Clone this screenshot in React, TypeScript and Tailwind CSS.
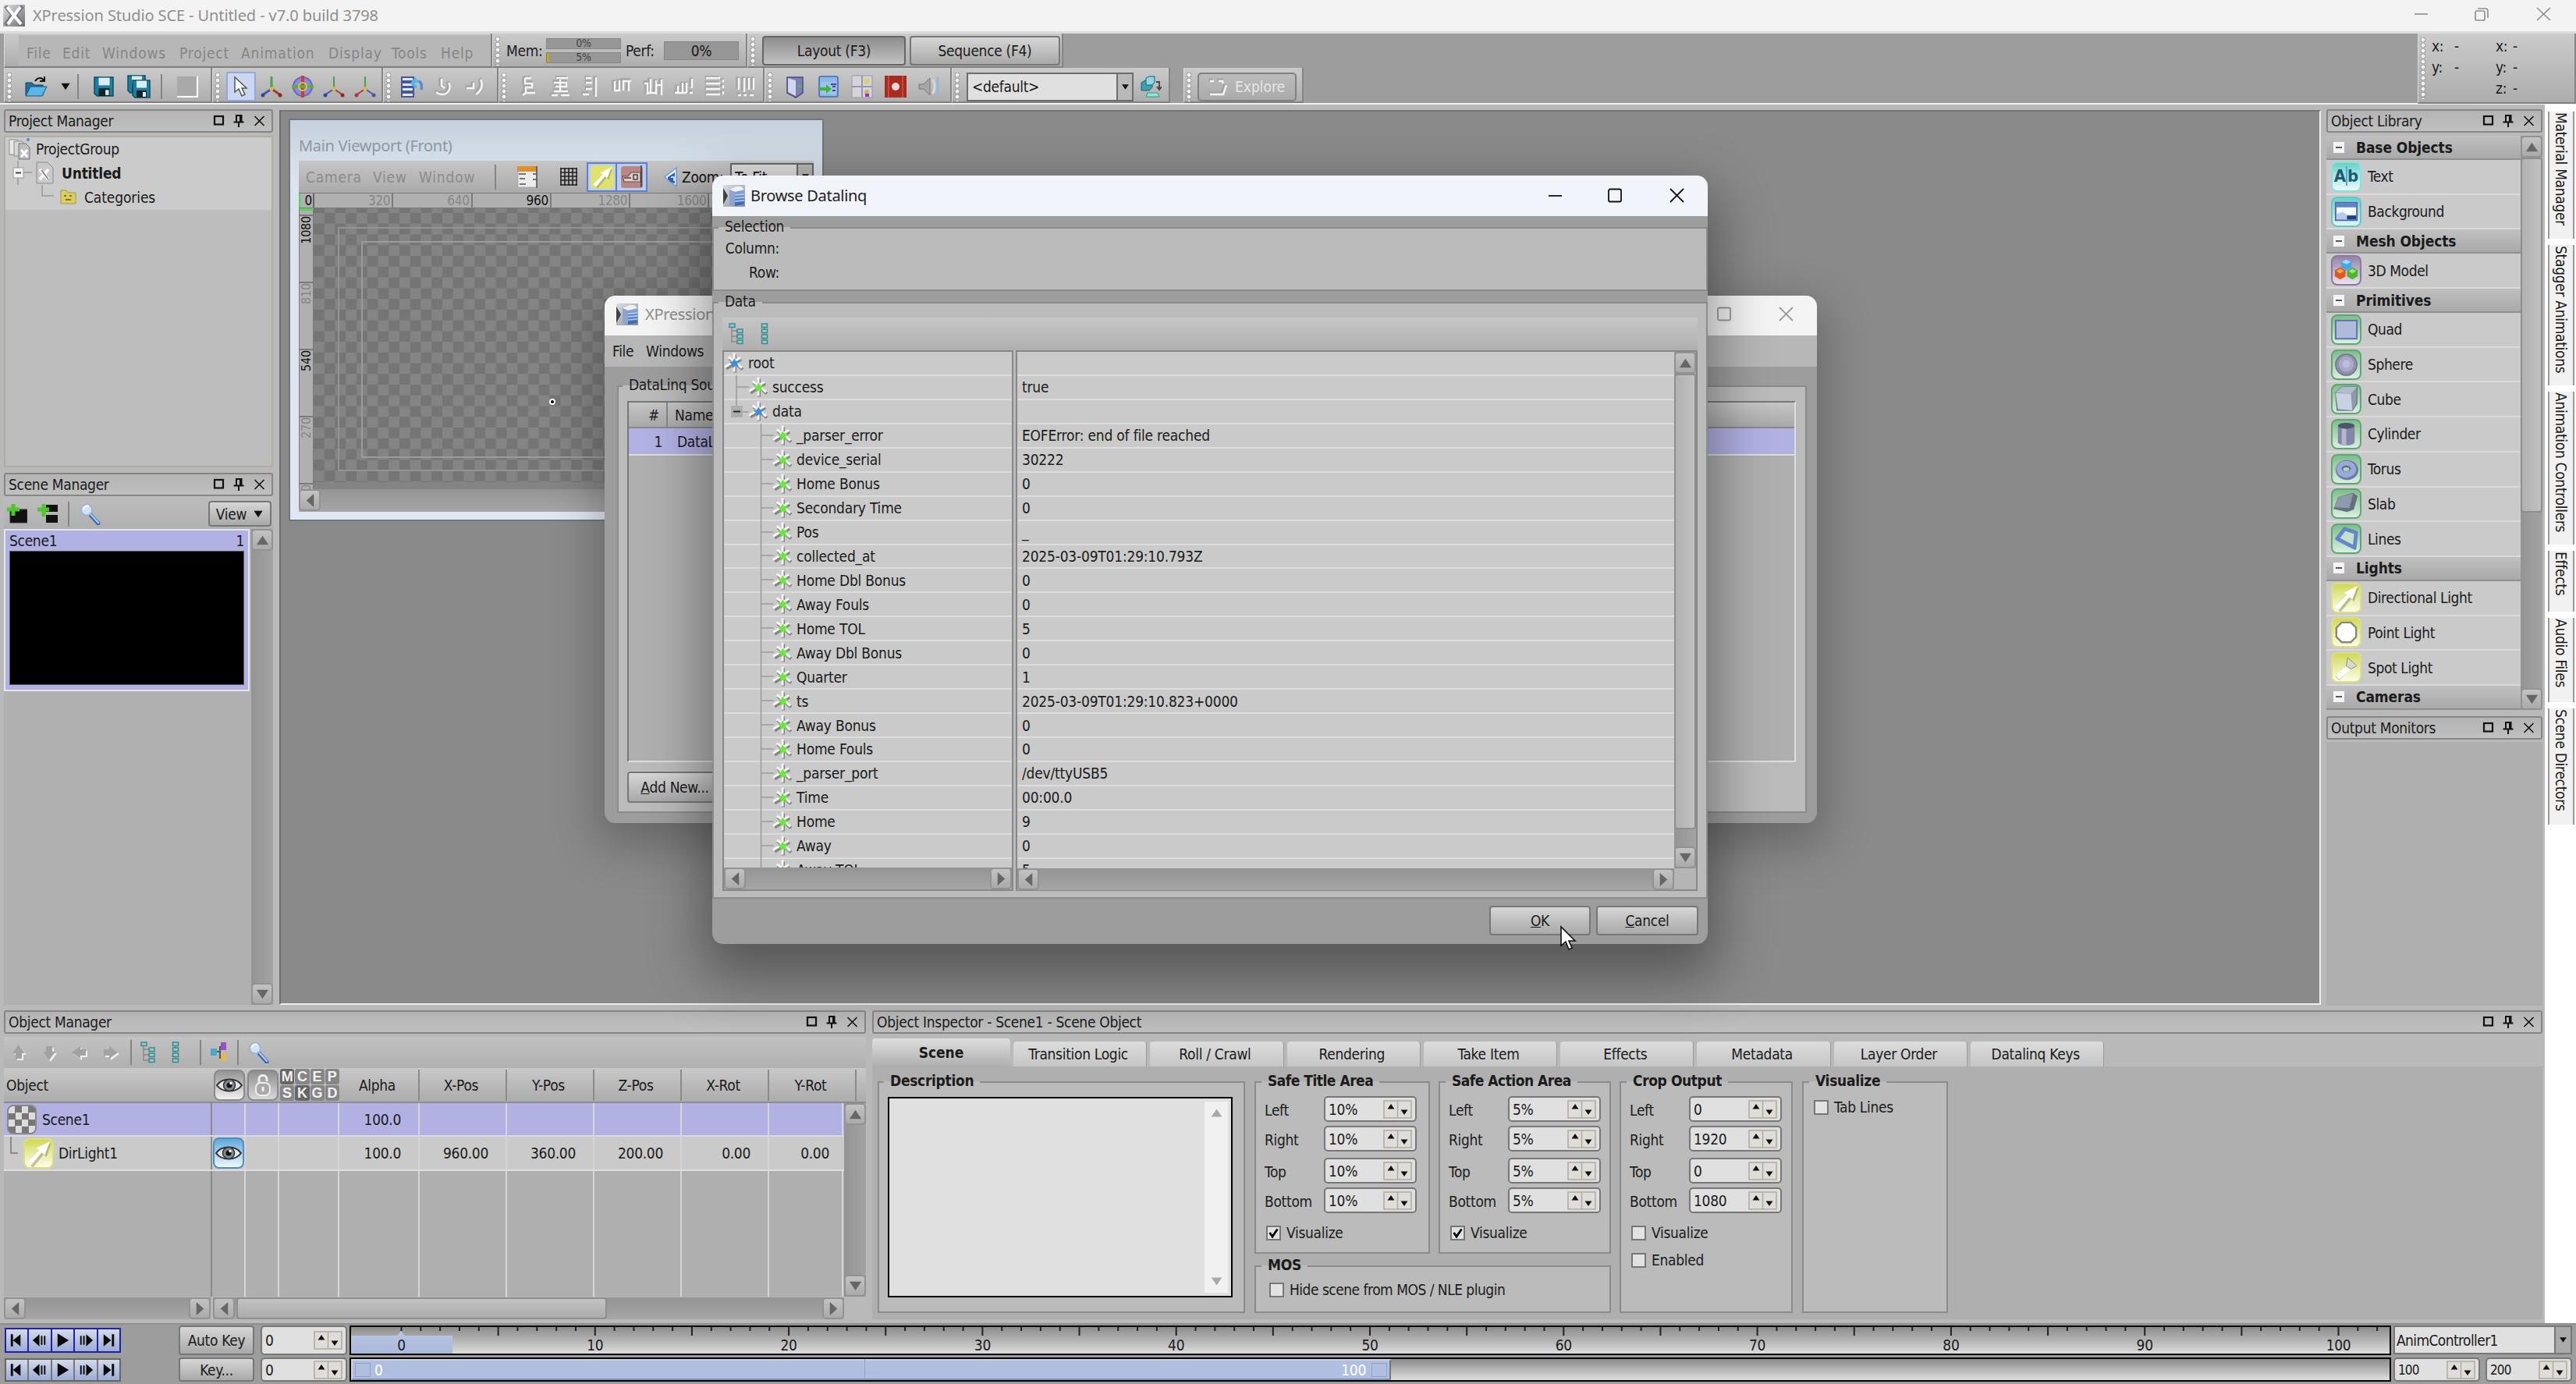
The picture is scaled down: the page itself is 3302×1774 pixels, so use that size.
import type { ReactNode } from 'react';

type BoxProps = { className?: string; children?: ReactNode };

const objectRows: { kind: 'head' | 'item'; label: string; icon?: string }[] = [
	{ kind: 'head', label: 'Base Objects' },
	{ kind: 'item', label: 'Text', icon: 'text' },
	{ kind: 'item', label: 'Background', icon: 'background' },
	{ kind: 'head', label: 'Mesh Objects' },
	{ kind: 'item', label: '3D Model', icon: 'model' },
	{ kind: 'head', label: 'Primitives' },
	{ kind: 'item', label: 'Quad', icon: 'quad' },
	{ kind: 'item', label: 'Sphere', icon: 'sphere' },
	{ kind: 'item', label: 'Cube', icon: 'cube' },
	{ kind: 'item', label: 'Cylinder', icon: 'cylinder' },
	{ kind: 'item', label: 'Torus', icon: 'torus' },
	{ kind: 'item', label: 'Slab', icon: 'slab' },
	{ kind: 'item', label: 'Lines', icon: 'lines' },
	{ kind: 'head', label: 'Lights' },
	{ kind: 'item', label: 'Directional Light', icon: 'directional' },
	{ kind: 'item', label: 'Point Light', icon: 'point' },
	{ kind: 'item', label: 'Spot Light', icon: 'spot' },
	{ kind: 'head', label: 'Cameras' },
];

const dataRows: { depth: number; name: string; value: string }[] = [
	{ depth: 0, name: 'root', value: '' },
	{ depth: 1, name: 'success', value: 'true' },
	{ depth: 1, name: 'data', value: '' },
	{ depth: 2, name: '_parser_error', value: 'EOFError: end of file reached' },
	{ depth: 2, name: 'device_serial', value: '30222' },
	{ depth: 2, name: 'Home Bonus', value: '0' },
	{ depth: 2, name: 'Secondary Time', value: '0' },
	{ depth: 2, name: 'Pos', value: '_' },
	{ depth: 2, name: 'collected_at', value: '2025-03-09T01:29:10.793Z' },
	{ depth: 2, name: 'Home Dbl Bonus', value: '0' },
	{ depth: 2, name: 'Away Fouls', value: '0' },
	{ depth: 2, name: 'Home TOL', value: '5' },
	{ depth: 2, name: 'Away Dbl Bonus', value: '0' },
	{ depth: 2, name: 'Quarter', value: '1' },
	{ depth: 2, name: 'ts', value: '2025-03-09T01:29:10.823+0000' },
	{ depth: 2, name: 'Away Bonus', value: '0' },
	{ depth: 2, name: 'Home Fouls', value: '0' },
	{ depth: 2, name: '_parser_port', value: '/dev/ttyUSB5' },
	{ depth: 2, name: 'Time', value: '00:00.0' },
	{ depth: 2, name: 'Home', value: '9' },
	{ depth: 2, name: 'Away', value: '0' },
	{ depth: 2, name: 'Away TOL', value: '5' },
];

const sideTabs = [
	{ label: 'Material Manager', size: 'h-[163px]' },
	{ label: 'Stagger Animations', size: 'h-[180px]' },
	{ label: 'Animation Controllers', size: 'h-[196px]' },
	{ label: 'Effects', size: 'h-[78px]' },
	{ label: 'Audio Files', size: 'h-[108px]' },
	{ label: 'Scene Directors', size: 'h-[149px]' },
];

const inspectorTabs = ['Transition Logic', 'Roll / Crawl', 'Rendering', 'Take Item', 'Effects', 'Metadata', 'Layer Order', 'Datalinq Keys'];

/* ---------- small shared pieces ---------- */

const Grip = ({ className = 'h-[38px]' }: BoxProps) => (
	<div className={`w-3 shrink-0 bg-[radial-gradient(circle_at_6px_4px,#f4f4f4_2px,#8d8d8d_3px,transparent_3.6px)] bg-[length:12px_7px] ${className}`} />
);

const Strip = ({ className = '', children }: BoxProps) => (
	<div className={`flex shrink-0 items-center border-r-2 border-b-2 border-l border-r-[#858585] border-b-[#808080] border-l-[#d8d8d8] bg-linear-to-b from-[#cbcbcb] to-[#adadad] ${className}`}>{children}</div>
);

const Sep = ({ className = '' }: BoxProps) => <div className={`h-8 w-[2px] shrink-0 bg-[#858585] ${className}`} />;

const Slot = ({ className = 'w-10', children }: BoxProps) => (
	<div className={`flex shrink-0 items-center justify-center ${className}`}>{children}</div>
);

const PushButton = ({ className = '', children }: BoxProps) => (
	<div className={`flex shrink-0 items-center justify-center rounded-[4px] border-2 border-[#777] bg-linear-to-b from-[#d6d6d6] to-[#a9a9a9] ${className}`}>{children}</div>
);

const Triangle = ({ dir, color = '#666', size = 20 }: { dir: 'up' | 'down' | 'left' | 'right'; color?: string; size?: number }) => {
	const points = {
		up: '10,4 18,16 2,16',
		down: '2,4 18,4 10,16',
		left: '5,10 15,1 15,19',
		right: '15,10 5,1 5,19',
	};
	return (
		<svg width={size} height={size} viewBox="0 0 20 20">
			<polygon points={points[dir]} fill={color} />
		</svg>
	);
};

const ScrollButton = ({ dir }: { dir: 'up' | 'down' | 'left' | 'right' }) => (
	<div className="flex h-[28px] w-[28px] shrink-0 items-center justify-center rounded-[5px] border-2 border-[#929292] bg-linear-to-b from-[#c3c3c3] to-[#aaa]">
		<Triangle dir={dir} size={19} />
	</div>
);

const VScroll = ({ className = '', thumb }: { className?: string; thumb?: string }) => (
	<div className={`flex w-[28px] shrink-0 flex-col justify-between bg-linear-to-r from-[#949494] to-[#a3a3a3] ${className}`}>
		<ScrollButton dir="up" />
		<div className="flex-1">
			{thumb && <div className={`rounded-[4px] border-2 border-[#8e8e8e] bg-linear-to-r from-[#b1b1b1] to-[#c1c1c1] ${thumb}`} />}
		</div>
		<ScrollButton dir="down" />
	</div>
);

const HScroll = ({ className = '', thumb }: { className?: string; thumb?: string }) => (
	<div className={`flex h-[28px] shrink-0 bg-linear-to-b from-[#949494] to-[#a6a6a6] ${className}`}>
		<ScrollButton dir="left" />
		<div className="flex-1">
			{thumb && <div className={`ml-[2px] h-full rounded-[4px] border-2 border-[#8e8e8e] bg-linear-to-b from-[#c3c3c3] to-[#ababab] ${thumb}`} />}
		</div>
		<ScrollButton dir="right" />
	</div>
);

const DockHeader = ({ title, className = '' }: { title: string; className?: string }) => (
	<div className={`flex h-[30px] shrink-0 items-center rounded-[3px] border-2 border-[#868686] bg-linear-to-b from-[#b4b4b4] to-[#c0c0c0] pr-[7px] pl-[4px] ${className}`}>
		<span className="flex-1">{title}</span>
		<svg width="68" height="20" viewBox="0 0 68 20" fill="none" stroke="#111">
			<rect x="2" y="4" width="11" height="10.500" strokeWidth="2.200" />
			<path d="M30 11V3h6.500v8M26.500 11.500h13M33 11.500V18" strokeWidth="2" />
			<path d="M35.500 3v8" strokeWidth="3" />
			<path d="M53.500 4l12 12M65.500 4l-12 12" strokeWidth="1.600" />
		</svg>
	</div>
);

const Group = ({ title, className = '', legend = 'ml-[6px]', children }: { title: string; className?: string; legend?: string; children?: ReactNode }) => (
	<fieldset className={`min-w-0 shrink-0 border-2 border-[#8b8b8b] bg-[#bbb] ${className}`}>
		<legend className={`h-5 px-[8px] leading-[16px] ${legend}`}>{title}</legend>
		{children}
	</fieldset>
);

const Spin = ({ value, className = 'h-[33px] w-[119px]' }: { value: string; className?: string }) => (
	<div className={`flex shrink-0 items-center rounded-[5px] border-2 border-[#777] bg-[#e0e0e0] pr-[4px] pl-[4px] ${className}`}>
		<span className="flex-1">{value}</span>
		<svg width="37" height="24" viewBox="0 0 37 24">
			<rect x="1" y="1" width="35" height="22" fill="#deddd9" stroke="#b3ada0" strokeWidth="1.600" />
			<path d="M18.500 1v22" stroke="#b3ada0" strokeWidth="1.600" />
			<polygon points="10,5 14.500,11.500 5.500,11.500" fill="#111" />
			<polygon points="22.500,12.500 31.500,12.500 27,19" fill="#111" />
		</svg>
	</div>
);

const Check = ({ label, checked, className = '' }: { label: string; checked?: boolean; className?: string }) => (
	<div className={`flex items-center gap-[7px] ${className}`}>
		<svg width="19" height="19" viewBox="0 0 19 19">
			<rect x="1" y="1" width="17" height="17" fill="#e2e2e2" stroke="#777" strokeWidth="2" />
			{checked && <path d="M4.500 9l3.500 5 6.500-9.500" fill="none" stroke="#000" strokeWidth="2.800" />}
		</svg>
		<span>{label}</span>
	</div>
);

/* ---------- icons ---------- */

const AppIcon = () => (
	<svg width="28" height="28" viewBox="0 0 28 28">
		<defs>
			<linearGradient id="appBg" x1="0" y1="0" x2="1" y2="1">
				<stop offset="0" stopColor="#e4e4e4" />
				<stop offset="1" stopColor="#6d6d72" />
			</linearGradient>
		</defs>
		<rect width="28" height="28" fill="url(#appBg)" />
		<path d="M3 2l9 11L3 26M25 2l-9 11 9 13" stroke="#77777e" strokeWidth="5" fill="none" />
		<path d="M5 3l18 22M22 3L6 25" stroke="#fafafa" strokeWidth="4" />
	</svg>
);

const DatalinqIcon = () => (
	<svg width="28" height="28" viewBox="0 0 28 28">
		<defs>
			<linearGradient id="dlBg" x1="0" y1="0" x2="1" y2="1">
				<stop offset="0" stopColor="#dcdee2" />
				<stop offset="1" stopColor="#8d8f96" />
			</linearGradient>
			<linearGradient id="dlBox" x1="0" y1="0" x2="0" y2="1">
				<stop offset="0" stopColor="#9fb6dc" />
				<stop offset="1" stopColor="#3362b4" />
			</linearGradient>
		</defs>
		<rect width="28" height="28" fill="url(#dlBg)" />
		<path d="M0 4l6 10-6 11z" fill="#3c4048" />
		<path d="M8 6l12-3 7 3v19l-12 2-7-3z" fill="url(#dlBox)" />
		<path d="M8 6l9-4h6l4 4-12 3z" fill="#eef2f8" />
		<path d="M8 6l7 3v18l-7-3z" fill="#8fa4cc" />
		<path d="M15 13l12-1M15 17l12-1M15 21l12-1" stroke="#b5d0fa" strokeWidth="1.400" />
	</svg>
);

const TreeIcon = ({ flat }: { flat?: boolean }) => (
	<svg width="20" height="28" viewBox="0 0 20 28" fill="#7fd4d6" stroke="#467f84" strokeWidth="1.400">
		<path d={flat ? 'M8 3v22' : 'M4 3v22M4 10h8M4 17h8M4 24h8'} stroke="#888" />
		<rect x={flat ? 4.500 : 1} y="1" width="7" height="4.500" />
		<rect x={flat ? 4.500 : 11} y="8" width="7" height="4.500" />
		<rect x={flat ? 4.500 : 11} y="15" width="7" height="4.500" />
		<rect x={flat ? 4.500 : 11} y="22" width="7" height="4.500" />
	</svg>
);

const SearchIcon = () => (
	<svg width="28" height="28" viewBox="0 0 28 28">
		<path d="M14 15l10 11" stroke="#3566ad" strokeWidth="5" strokeLinecap="round" />
		<path d="M15 15l9 10" stroke="#a7cdf5" strokeWidth="2.400" strokeLinecap="round" />
		<circle cx="9" cy="8.500" r="7" fill="#cfe4fb" stroke="#9fb4d4" strokeWidth="2" />
		<path d="M5 8a5 5 0 0 1 7-4" stroke="#fff" strokeWidth="2" fill="none" />
	</svg>
);

const OpenIcon = () => (
	<svg width="30" height="28" viewBox="0 0 30 28">
		<path d="M1 9h8l3 3h11v13H1z" fill="#1e6f9c" stroke="#123f5e" />
		<path d="M7 14h21l-6 12H1z" fill="#58b7e8" stroke="#1b5577" />
		<path d="M13 7c3-5 8-5 11-1M25 1v6h-6" stroke="#111" strokeWidth="2" fill="none" />
	</svg>
);

const Disk = ({ x = 0, y = 0 }: { x?: number; y?: number }) => (
	<g transform={`translate(${x} ${y})`}>
		<path d="M1 1h22v22H4l-3-3z" fill="#1e7e9e" stroke="#0f4d66" strokeWidth="1.500" />
		<rect x="6" y="1.500" width="13" height="9" fill="#d8eef5" />
		<rect x="6" y="14" width="13" height="9" fill="#12242c" />
		<rect x="14" y="16" width="4" height="6" fill="#e8e8e8" />
	</g>
);

const ArrowCursor = () => (
	<svg width="22" height="28" viewBox="0 0 22 28">
		<path d="M3 2v19l5-4 4 9 4-2-4-8h6z" fill="#fff" stroke="#555" strokeWidth="1.500" />
	</svg>
);

const AxisIcon = ({ fade, flat }: { fade?: boolean; flat?: boolean }) => (
	<svg width="30" height="30" viewBox="0 0 30 30" strokeWidth={fade ? 2 : 3} fill="none">
		<path d="M15 2v16" stroke="#4aa34a" />
		<path d="M15 18L3 26" stroke={flat ? '#b03a3a' : '#4a55a8'} />
		<path d="M15 18l12 8" stroke={flat ? '#4a55a8' : '#a33a2c'} />
		<circle cx="15" cy="18" r="2.500" fill="#e0b64c" stroke="none" />
		<circle cx="4" cy="26" r="2.500" fill={flat ? '#b03a3a' : '#3846a0'} stroke="none" />
		<circle cx="26" cy="26" r="2.500" fill={flat ? '#4a55a8' : '#8f2a22'} stroke="none" />
	</svg>
);

const RotateIcon = () => (
	<svg width="30" height="30" viewBox="0 0 30 30">
		<circle cx="15" cy="15" r="12" fill="#8f88e0" stroke="#6b64c4" strokeWidth="2" />
		<path d="M15 1v28" stroke="#c5432f" strokeWidth="4" />
		<path d="M1 15h28" stroke="#57b23c" strokeWidth="4" />
		<circle cx="15" cy="15" r="5" fill="none" stroke="#e2c13d" strokeWidth="2" />
	</svg>
);

const UndoListIcon = () => (
	<svg width="28" height="28" viewBox="0 0 28 28">
		<path d="M1 2h15v5H1zM1 9h15v5H1zM1 15h15v5H1zM1 22h15v5H1z" fill="#dfe9f8" stroke="#46579c" strokeWidth="2" />
		<path d="M26 18c2-9-3-14-11-9M19 3l-5 7 6 5" stroke="#4fb6ec" strokeWidth="3.400" fill="none" />
		<path d="M26 18c1-5 1-9-3-11" stroke="#6b7fc4" strokeWidth="3" fill="none" />
	</svg>
);

// embossed look of a disabled tool: grey body with a white lower-right edge
const GhostIcon = ({ d }: { d: string }) => (
	<svg width="26" height="28" viewBox="0 0 26 28" fill="none">
		<path d={d} stroke="#a3a3a3" strokeWidth="4.500" transform="translate(-1.500 -1.500)" />
		<path d={d} stroke="#f6f6f6" strokeWidth="2.400" />
	</svg>
);

const GhostArrow = ({ turn }: { turn: number }) => (
	<svg width="26" height="28" viewBox="0 0 26 28">
		<g transform={`rotate(${turn} 13 14)`}>
			<polygon points="13,4 21,15 17,15 17,22 9,22 9,15 5,15" fill="#f0f0f0" transform={`rotate(${-turn} 13 14) translate(2 2) rotate(${turn} 13 14)`} />
			<polygon points="13,4 21,15 17,15 17,22 9,22 9,15 5,15" fill="#a2a2a2" />
		</g>
	</svg>
);

const alignGlyphs = [
	'M7 3h8M7 3v7h9v5H8v6M4 25l4-3h12',
	'M8 3h15M5 9h16v5H7M5 20h18M2 25h8M14 25h11M13 5v14',
	'M19 2v25M6 9h8M6 17h8M2 24h8M6 3h7',
	'M4 7v12h6V6M15 19V7h10M22 8v12',
	'M2 10h4v14M10 4v18h6M17 6v18M17 12h8M24 5v20M6 22h4',
	'M2 22h15M6 13v9M12 9v13M17 9v13M21 22h4M24 4v12',
	'M2 3h18M2 10h18M2 17h18M2 24h18M24 5v3M24 12v4M24 20v4',
	'M5 3v15M12 3v18M18 3v15M24 3v15M4 25h4M11 25h4M19 25h5',
];

const ViewportTools = () => (
	<>
		<svg width="26" height="28" viewBox="0 0 26 28">
			<rect x="1" y="1" width="24" height="26" fill="#ececec" stroke="#aaa" />
			<rect width="26" height="7" fill="#e1902c" />
			<path d="M2 10h9M20 10h5M3 16h7M20 17h5M3 23h8" stroke="#777" strokeWidth="1.800" />
			<path d="M25 0v28" stroke="#555" strokeWidth="1.600" />
		</svg>
		<svg className="ml-[29px]" width="22" height="23" viewBox="0 0 22 23">
			<path d="M1 0v23M6 0v23M11 0v23M16 0v23M21 0v23M0 1h22M0 6h22M0 11h22M0 16h22M0 22h22" stroke="#222" strokeWidth="1.600" />
		</svg>
	</>
);

const tileColors: Record<string, string> = {
	text: 'from-[#65d3cb] to-[#e9fbfa] border-[#8de0da]',
	background: 'from-[#65d3cb] to-[#d9f6f4] border-[#6cc5c0]',
	model: 'from-[#9583a8] to-[#e9e3ee] border-[#8b78a0]',
	light: 'from-[#d3d850] to-[#fdfde9] border-[#dce07c]',
	shape: 'from-[#7fbd8c] to-[#dcefe0] border-[#5ea672]',
};

const tileArt: Record<string, ReactNode> = {
	background: (
		<>
			<rect x="5" y="7" width="28" height="23" fill="#f4f8ff" stroke="#4a68a8" strokeWidth="2" />
			<path d="M6 8h26v5H6z" fill="#5f86cc" />
			<path d="M6 22l8-3 7 4h11v6H6z" fill="#b8cbe8" />
			<path d="M20 24h12v5H20z" fill="#1f3f7c" />
		</>
	),
	model: (
		<>
			<path d="M19 4l7 4v7l-7 4-7-4V8z" fill="#4ba5ea" />
			<path d="M11 15l7 4v8l-7 4-7-4v-8z" fill="#e0561e" />
			<path d="M27 15l7 4v8l-7 4-7-4v-8z" fill="#4fb52e" />
			<path d="M19 5l6 3-6 3-6-3z" fill="#a6d9fb" />
			<path d="M11 17l5 3-5 3-5-3z" fill="#f5b03d" />
			<path d="M27 17l5 3-5 3-5-3z" fill="#a0e37e" />
		</>
	),
	quad: <rect x="5" y="7" width="28" height="24" fill="#aebbdc" stroke="#5974ad" strokeWidth="2" />,
	sphere: (
		<>
			<circle cx="19" cy="19" r="14" fill="#8f90ac" stroke="#71728c" strokeWidth="1.500" />
			<circle cx="19" cy="18" r="10" fill="#a9aac8" />
			<circle cx="19" cy="18" r="5" fill="#bcbde0" />
		</>
	),
	cube: (
		<>
			<path d="M5 10l9-7h19v22l-6 9H7z" fill="#8e99ac" stroke="#6e7a8d" strokeWidth="1.500" />
			<path d="M5 11l20 1 2 22-19-2z" fill="#c9d1e4" />
			<path d="M5 10l9-7h19l-8 9z" fill="#b4bdd0" />
		</>
	),
	cylinder: (
		<>
			<path d="M8 8v22c3 5 19 5 22 0V8z" fill="#8486a6" />
			<path d="M13 10v23h6V11z" fill="#b4b6d2" />
			<ellipse cx="19" cy="8" rx="11" ry="4" fill="#4d5668" />
		</>
	),
	torus: (
		<>
			<ellipse cx="20" cy="20" rx="15" ry="13" fill="#6b7aa8" />
			<ellipse cx="19" cy="19" rx="13" ry="11" fill="#9aaad6" />
			<ellipse cx="19" cy="18" rx="6" ry="4" fill="#5b6a98" />
			<ellipse cx="19" cy="19" rx="4" ry="2.500" fill="#b2d4ba" />
		</>
	),
	slab: (
		<>
			<path d="M2 26l7-16 19-5 6 4-5 18-9 3z" fill="#65707f" />
			<path d="M3 24l7-14 18-4-5 19z" fill="#8f9aab" />
		</>
	),
	lines: <path d="M7 19L17 6l15 5-2 20z" fill="#c6e2cf" stroke="#6288c8" strokeWidth="5" strokeLinejoin="round" />,
	directional: (
		<>
			<path d="M5 32l16-16-4-4 17-8-6 18-4-3L10 36z" fill="#9a9a60" opacity=".6" transform="translate(1.500 1.500)" />
			<path d="M4 31l16-16-4-3 18-9-7 18-4-3L9 35z" fill="#fff" />
		</>
	),
	point: <path d="M13 6h12l7 7v12l-7 7H13l-7-7V13z" fill="#fff" stroke="#8a8a70" strokeWidth="2.500" />,
	spot: (
		<>
			<path d="M5 31l14-13 2-11 12 10-10 4L10 36z" fill="#a9a996" />
			<path d="M5 30l14-13 6 4L10 35z" fill="#fff" />
			<path d="M19 17l2-11 12 11-8 4z" fill="#d8d8cf" stroke="#8f8f7c" />
		</>
	),
};

const Tile = ({ icon }: { icon: string }) => {
	let tone = tileColors.shape;
	if (['directional', 'point', 'spot'].includes(icon)) tone = tileColors.light;
	else if (tileColors[icon]) tone = tileColors[icon];
	return (
		<div className={`flex h-[39px] w-[39px] shrink-0 items-center justify-center overflow-hidden rounded-[8px] border-2 bg-linear-to-b ${tone}`}>
			{icon === 'text' ? (
				<span className="font-['DejaVu_Sans_Condensed','DejaVu_Sans',sans-serif] text-[22px] font-bold tracking-normal text-[#1f5a74]">
					A<span className="border-l-2 border-[#4da8e8]">b</span>
				</span>
			) : (
				<svg width="37" height="37" viewBox="0 0 38 38" className="shrink-0">{tileArt[icon]}</svg>
			)}
		</div>
	);
};

const EyeTile = ({ blue }: { blue?: boolean }) => (
	<div className={`flex h-[40px] w-[40px] shrink-0 items-center justify-center rounded-[8px] border-2 bg-linear-to-b ${blue ? 'border-[#4e8fbf] from-[#5fa8dc] to-[#eef8ff]' : 'border-[#8a8a8a] from-[#949494] to-[#f1f1f1]'}`}>
		<svg width="34" height="26" viewBox="0 0 34 26">
			<path d="M1 13C8 3 26 3 33 13 26 23 8 23 1 13z" fill="#e6e6e6" stroke="#333" strokeWidth="2" />
			<circle cx="17" cy="13" r="7.500" fill="#7d8a90" stroke="#333" strokeWidth="1.500" />
			<circle cx="17" cy="13" r="3.500" fill="#111" />
			<circle cx="19" cy="10.500" r="1.700" fill="#fff" />
		</svg>
	</div>
);

/* ---------- top bars ---------- */

const TitleBar = () => (
	<div className="flex h-10 shrink-0 items-center bg-[#f3f3f3] pl-1 font-['Noto_Sans','Open_Sans',sans-serif] text-[20px] tracking-[-0.1px] text-[#8f8f8f]">
		<AppIcon />
		<span className="ml-[10px] flex-1">XPression Studio SCE - Untitled - v7.0 build 3798</span>
		<svg width="180" height="24" viewBox="0 0 180 24" fill="none" stroke="#909090" strokeWidth="1.700" className="mr-[29px]">
			<path d="M2 10h17" />
			<rect x="80" y="6" width="12" height="12" rx="2" />
			<path d="M83 3h10q3 0 3 3v9" />
			<path d="M159 2l17 16M176 2l-17 16" />
		</svg>
	</div>
);

const MenuRow = () => (
	<div className="flex h-[44px] shrink-0">
		<Strip className="w-[626px] pl-[18px]">
			<div className="flex h-[39px] flex-1 items-center bg-[#b7b7b7] pt-[7px] pl-[10px] tracking-[0.800px] text-[#868686]">
				{[['File', 'w-[46px]'], ['Edit', 'w-[51px]'], ['Windows', 'w-[99px]'], ['Project', 'w-[79px]'], ['Animation', 'w-[112px]'], ['Display', 'w-[81px]'], ['Tools', 'w-[63px]'], ['Help', 'w-[50px]']].map(([label, size]) => (
					<span key={label} className={size}>{label}</span>
				))}
			</div>
		</Strip>
		<Strip className="w-[327px] pt-[2px]">
			<Grip />
			<span className="ml-[5px] w-[51px]">Mem:</span>
			<div className="flex w-[96px] flex-col gap-1 text-center text-[14px] leading-[11px] text-[#444]">
				<div className="h-[14px] border border-[#868686] bg-[#979797]">0%</div>
				<div className="h-[14px] border border-[#868686] border-l-[#3da83d] bg-[#979797] shadow-[inset_3px_0_0_#d8992f]">5%</div>
			</div>
			<span className="ml-[6px] w-[49px]">Perf:</span>
			<div className="flex h-[24px] w-[96px] items-center justify-center border border-[#868686] bg-[#979797]">0%</div>
		</Strip>
		<Strip className="w-[405px] pt-[2px]">
			<Grip />
			<div className="ml-[6px] flex h-[38px] w-[184px] items-center justify-center rounded-[4px] border-2 border-[#666] bg-linear-to-b from-[#8e8e8e] to-[#c2c2c2]">Layout (F3)</div>
			<PushButton className="ml-[5px] h-[38px] w-[193px]">Sequence (F4)</PushButton>
		</Strip>
	</div>
);

const ToolRow = () => (
	<div className="flex h-[45px] shrink-0 *:pt-[5px]">
		<Strip className="w-[267px]">
			<Grip />
			<Slot className="ml-[14px] w-[30px]"><OpenIcon /></Slot>
			<Slot className="ml-[15px] w-[14px]"><Triangle dir="down" color="#111" size={14} /></Slot>
			<Sep className="ml-[8px]" />
			<svg className="ml-[19px]" width="26" height="26" viewBox="0 0 24 24"><Disk /></svg>
			<svg className="ml-[17px]" width="31" height="30" viewBox="0 0 31 30"><Disk /><Disk x={6} y={6} /></svg>
			<Sep className="ml-[12px]" />
			<div className="ml-[19px] h-[27px] w-[27px] border-r-2 border-b-2 border-white bg-[#a9a9a9]" />
		</Strip>
		<Strip className="w-[219px]">
			<Grip />
			<div className="ml-[5px] flex h-[38px] w-[38px] items-center justify-center border-2 border-[#93a9dc] bg-[#cbd6f0]"><ArrowCursor /></div>
			<Slot><AxisIcon /></Slot>
			<Slot><RotateIcon /></Slot>
			<Slot><AxisIcon fade /></Slot>
			<Slot><AxisIcon fade flat /></Slot>
		</Strip>
		<Strip className="w-[148px]">
			<Grip />
			<Slot className="ml-[4px] w-10"><UndoListIcon /></Slot>
			<Slot><GhostIcon d="M20 9c4 6 0 15-8 15-4 0-6-1-8-3M11 4v9l4 3" /></Slot>
			<Slot><GhostIcon d="M21 5c4 8 0 15-6 19M3 16l9 0V9" /></Slot>
		</Strip>
		<Strip className="w-[341px]">
			<Grip className="mr-[7px] h-[38px]" />
			{alignGlyphs.map((d) => <Slot key={d} className="w-[39.500px]"><GhostIcon d={d} /></Slot>)}
		</Strip>
		<Strip className="w-[240px]">
			<Grip className="mr-[4px] h-[38px]" />
			<Slot className="w-[43px]">
				<svg width="24" height="30" viewBox="0 0 24 30">
					<path d="M2 3h20v20l-9 6-11-6z" fill="#7d7fb4" stroke="#4b4d80" strokeWidth="1.500" />
					<path d="M3 4l10 3v20L3 22z" fill="#d3d4ee" />
					<rect x="15" y="13" width="6" height="3" fill="#4fb070" />
				</svg>
			</Slot>
			<Slot className="w-[43px]">
				<svg width="26" height="28" viewBox="0 0 26 28">
					<rect x="1" y="1" width="24" height="26" rx="2" fill="#8db7e8" stroke="#3e6cae" strokeWidth="1.500" />
					<rect x="3" y="8" width="20" height="16" fill="#9cc3ee" />
					<path d="M1 15h9v-4l7 6-7 6v-4H1z" fill="#45b335" />
					<path d="M16 11h7M18 14h4M18 19h4" stroke="#5a3b8f" strokeWidth="2" />
				</svg>
			</Slot>
			<Slot className="w-[43px]">
				<svg width="28" height="30" viewBox="0 0 28 30">
					<path d="M1 1h26v28H1z" fill="#d6d4da" stroke="#9b97ad" />
					<path d="M14 1v28M1 15h26" stroke="#9b97ad" strokeWidth="2" />
					<circle cx="20" cy="8" r="4" fill="#d9cf79" />
					<circle cx="20" cy="22" r="3" fill="#cbb45e" />
					<path d="M18 24h5v4h-5z" fill="#a02bc4" />
				</svg>
			</Slot>
			<Slot className="w-[43px]">
				<svg width="28" height="28" viewBox="0 0 28 28">
					<rect width="28" height="28" fill="#a82a20" />
					<path d="M5 0v28M23 0v28" stroke="#c64a3c" strokeWidth="2" />
					<circle cx="14" cy="14" r="5" fill="#f3d9d5" />
				</svg>
			</Slot>
			<Slot className="w-[43px]">
				<svg width="28" height="28" viewBox="0 0 28 28">
					<path d="M1 11h6l8-8v22l-8-8H1z" fill="#a5a9a6" stroke="#777" />
					<path d="M18 5c4 4 4 14 0 18" stroke="#d8d8d8" strokeWidth="3" fill="none" />
					<path d="M25 2v24" stroke="#9ab4dc" strokeWidth="3" />
				</svg>
			</Slot>
		</Strip>
		<Strip className="w-[280px]">
			<Grip />
			<div className="ml-[6px] flex h-[37px] w-[214px] border-2 border-[#6d6d6d] bg-[#e0e0e0]">
				<span className="flex-1 self-center pl-[5px]">&lt;default&gt;</span>
				<div className="flex w-[20px] items-center justify-center border-l-2 border-[#6d6d6d] bg-[#b9b9b9]"><Triangle dir="down" color="#111" size={11} /></div>
			</div>
			<Slot className="ml-[2px] w-10">
				<svg width="28" height="28" viewBox="0 0 28 28">
					<path d="M2 9l5-3h9v9l-4 4H2z" fill="#3f9fb0" stroke="#1f5f6c" />
					<path d="M8 3l4-2h7v8l-4 3H8z" fill="#8fd6e0" stroke="#1f5f6c" />
					<path d="M21 8h4v9M22 14l3 4 3-4" stroke="#444" strokeWidth="1.800" fill="none" />
					<path d="M10 22h13l2 5H8z" fill="#8ee4da" stroke="#3f8f88" />
				</svg>
			</Slot>
		</Strip>
		<Strip className="ml-[17px] w-[154px]">
			<Grip />
			<div className="ml-[5px] flex h-[37px] w-[127px] items-center gap-[9px] rounded-[5px] border-2 border-[#818181] bg-linear-to-b from-[#bcbcbc] to-[#aaa] pl-[11px] tracking-normal text-[#e6e6e6]">
				<GhostIcon d="M3 7h5M14 7h5l1 3M3 24h17l4-12" />
				Explore
			</div>
		</Strip>
	</div>
);

const TopBars = () => (
	<div className="flex h-[94px] shrink-0 justify-between border-t-[3px] border-b-2 border-t-[#dcdcdc] border-b-[#f1f1f1] bg-[#9d9d9d] pl-[5px]">
		<div className="flex flex-col">
			<MenuRow />
			<ToolRow />
		</div>
		<Strip className="h-[90px] w-[203px]">
			<Grip className="h-[80px]" />
			<div className="-mt-[2px] ml-[5px] grid flex-1 grid-cols-[29px_53px_22px_1fr] gap-y-[7px] leading-[20px]">
				<span>x:</span><span>-</span><span>x:</span><span>-</span>
				<span>y:</span><span>-</span><span>y:</span><span>-</span>
				<span /><span /><span>z:</span><span>-</span>
			</div>
		</Strip>
	</div>
);

/* ---------- left dock ---------- */

const LeftDock = () => (
	<div className="flex w-[352px] shrink-0 flex-col pt-[6px] pl-[5px]">
		<DockHeader title="Project Manager" className="w-[345px]" />
		<div className="mt-[4px] h-[425px] w-[345px] border-2 border-[#b3aca2] bg-[#bdbdbd]">
			<div className="flex h-[93px] flex-col bg-[#cbcbcb] pl-[3px]">
				<div className="flex h-[30px] items-center gap-[7px]">
					<svg width="29" height="28" viewBox="0 0 29 28">
						<path d="M2 2h10l4 5v14H2z" fill="#e9e9e9" stroke="#8c8c8c" />
						<path d="M8 4h10l4 5v14H8z" fill="#d7d7d7" stroke="#8c8c8c" />
						<path d="M14 7h9l5 5v15H14z" fill="#bdbdbd" stroke="#777" />
						<path d="M17 15l8 9M25 15l-8 9" stroke="#fff" strokeWidth="3" />
						<circle cx="26" cy="2" r="2" fill="#4a8bd4" />
					</svg>
					ProjectGroup
				</div>
				<div className="flex h-[31px] items-center">
					<svg width="66" height="31" viewBox="0 0 66 31">
						<path d="M13 0v31M13 15h18" stroke="#999" strokeWidth="1.500" />
						<rect x="7" y="9" width="13" height="13" fill="#f5f5f5" stroke="#999" />
						<path d="M10 15.500h7" stroke="#445" strokeWidth="2" />
						<path d="M37 2h14l7 7v20H37z" fill="#c9c9c9" stroke="#8c8c8c" />
						<path d="M41 11l11 13M52 11L41 24" stroke="#fff" strokeWidth="4" />
						<path d="M43 12l9 12" stroke="#777" strokeWidth="1.500" />
					</svg>
					<span className="pl-[3px] font-bold tracking-[-0.200px]">Untitled</span>
				</div>
				<div className="flex h-[31px] items-center">
					<svg width="92" height="31" viewBox="0 0 92 31">
						<path d="M44 0v14h15" stroke="#999" strokeWidth="1.500" fill="none" />
						<path d="M68 7h7l2 3h10v14H68z" fill="#d9cf62" stroke="#a59c3f" />
						<path d="M72 14h3M79 14h3M74 19h7" stroke="#7f7722" strokeWidth="2" />
					</svg>
					<span className="pl-[6px] tracking-[-0.100px]">Categories</span>
				</div>
			</div>
		</div>
		<DockHeader title="Scene Manager" className="mt-[7px] w-[345px]" />
		<div className="flex h-[42px] w-[345px] items-center bg-linear-to-b from-[#bdbdbd] to-[#b0b0b0] pt-[3px] pl-[3px]">
			<svg width="27" height="27" viewBox="0 0 27 27">
				<rect x="5" y="8" width="22" height="17" fill="#111" stroke="#333" />
				<path d="M9 1v15M1 8h16" stroke="#4fc52e" strokeWidth="5" />
			</svg>
			<svg className="ml-[12px]" width="28" height="27" viewBox="0 0 28 27">
				<path d="M12 2h15v9H12zM12 15h15v10H12z" fill="#111" />
				<path d="M9 1v16M1 8h15" stroke="#4fc52e" strokeWidth="5" />
			</svg>
			<Sep className="ml-[12px]" />
			<span className="ml-[13px]"><SearchIcon /></span>
			<PushButton className="mr-[2px] ml-auto h-[33px] w-[81px] gap-2">
				View<Triangle dir="down" color="#111" size={14} />
			</PushButton>
		</div>
		<div className="flex h-[610px] w-[345px] bg-[#b0b0b0]">
			<div className="flex-1">
				<div className="mr-[2px] flex h-[208px] flex-col border-2 border-[#e5e5ee] bg-[#b1b1e4] px-[5px] pb-[6px]">
					<div className="flex h-[26px] items-center justify-between">
						<span>Scene1</span>
						<span>1</span>
					</div>
					<div className="flex-1 border border-[#555] bg-black" />
				</div>
			</div>
			<VScroll />
		</div>
	</div>
);

/* ---------- workspace ---------- */

const MainViewport = () => (
	<div className="absolute top-[9px] left-[10px] flex h-[516px] w-[686px] flex-col border-2 border-[#6f7680] bg-[#dfe7f2] bg-linear-to-b from-[#c6d1dd] via-[#dbe4ee] via-15% to-[#dfe7f2] px-[11px]">
		<div className="flex h-[52px] shrink-0 items-end pb-[8px] font-['Noto_Sans','Open_Sans',sans-serif] text-[20px] text-[#8f979f]">Main Viewport (Front)</div>
		<div className="flex h-[41px] shrink-0 items-center bg-linear-to-b from-[#c6c6c6] to-[#aaa] pl-[9px] tracking-[0.800px] text-[#8b8b8b]">
			<span className="w-[86px]">Camera</span>
			<span className="w-[59px]">View</span>
			<span className="w-[97px]">Window</span>
			<Sep className="mr-[27px]" />
			<ViewportTools />
			<div className="ml-[12px] flex h-[38px] w-[39px] items-center justify-center border-2 border-[#5d80c9] bg-[#bccbf0]">
				<svg width="30" height="30" viewBox="0 0 38 38"><rect width="38" height="38" rx="6" fill="#dfe26d" />{tileArt.directional}</svg>
			</div>
			<div className="flex h-[38px] w-[39px] items-center justify-center border-2 border-l-0 border-[#5d80c9] bg-[#bccbf0]">
				<svg width="30" height="30" viewBox="0 0 30 30">
					<rect x="1" y="1" width="28" height="28" rx="4" fill="#b88784" />
					<path d="M3 14h7l4-5h12v12H5z" fill="#d8d0cc" stroke="#6a4a48" strokeWidth="1.200" />
					<path d="M5 16h9M17 12h5v6h-5z" stroke="#5c3a38" strokeWidth="1.500" fill="none" />
					<path d="M27 0v28" stroke="#333" strokeWidth="1.500" />
				</svg>
			</div>
			<svg className="ml-[20px]" width="20" height="28" viewBox="0 0 20 28">
				<path d="M17 2v24L2 14z" fill="#f4f8ff" stroke="#6f9be0" strokeWidth="1.500" />
				<path d="M6 14l9-6v14l-4-1-5-4z" fill="#2e63b4" />
				<path d="M10 14h4v5" stroke="#fff" strokeWidth="1.500" fill="none" />
			</svg>
			<span className="ml-[4px] w-[62px] tracking-[-0.300px] text-[#111]">Zoom:</span>
			<div className="flex h-[36px] flex-1 border-2 border-[#666] bg-[#dcdcdc] tracking-[-0.300px] text-[#111]">
				<span className="flex-1 self-center pl-1">To Fit</span>
				<span className="flex w-[20px] items-center justify-center border-l-2 border-[#666] bg-[#b5b5b5]"><Triangle dir="down" color="#111" size={11} /></span>
			</div>
		</div>
		<div className="flex h-[20px] shrink-0 border-y border-[#7b7b7b] bg-[#b0b0b0] text-right text-[17px] leading-[18px] text-[#868686]">
			<span className="w-[20px] shrink-0 border-r-2 border-l-2 border-r-[#666] border-l-[#53d653] pr-[1px] text-[#111]">0</span>
			{['320', '640', '960', '1280', '1600', '1920'].map((n) => (
				<span key={n} className={`w-[101.300px] shrink-0 border-r-2 border-[#7b7b7b] pr-[2px] ${n === '960' ? 'text-[#111]' : ''}`}>{n}</span>
			))}
		</div>
		<div className="flex min-h-0 flex-1">
			<div className="flex w-[19px] shrink-0 flex-col border-x border-t-[3px] border-x-[#7b7b7b] border-t-[#53d653] bg-[#b0b0b0] pt-[5px] text-[16px] tracking-[-0.200px] text-[#868686]">
				{['1080', '810', '540', '270', '0'].map((n) => (
					<div key={n} className={`flex h-[86px] shrink-0 items-start justify-center border-t-2 border-[#7b7b7b] ${n === '1080' || n === '540' ? 'text-[#111]' : ''}`}>
						<span className="rotate-180 leading-[16px] [writing-mode:vertical-rl]">{n}</span>
					</div>
				))}
			</div>
			<div className="relative flex-1 bg-[#848484]">
				<div className="h-[351px] bg-[repeating-conic-gradient(#757575_0_25%,#848484_0_50%)] bg-[length:27.500px_27.500px] bg-[position:0_6px]" />
				<div className="absolute top-[24px] left-[31px] h-[313px] w-[575px] border-2 border-[#939393]" />
				<div className="absolute top-[42px] left-[61px] h-[278px] w-[515px] border-2 border-[#9b9b9b]" />
				<div className="absolute top-[244px] left-[302px] h-[8px] w-[8px] rounded-full border-2 border-white bg-black" />
			</div>
		</div>
		<div className="mb-[10px] flex h-[29px] shrink-0 bg-linear-to-b from-[#949494] to-[#a6a6a6]"><ScrollButton dir="left" /></div>
	</div>
);

const DatalinqWindow = () => (
	<div className="absolute top-[236px] left-[415px] flex h-[676px] w-[1554px] flex-col overflow-hidden rounded-[14px] bg-[#9d9d9d]">
		<div className="flex h-[51px] shrink-0 items-center bg-[#f4f4f4] pb-[3px] pl-[15px] font-['Noto_Sans','Open_Sans',sans-serif] text-[20px] text-[#8f8f8f]">
			<DatalinqIcon />
			<span className="ml-[9px] flex-1">XPression DataLinq Server</span>
			<svg width="100" height="20" viewBox="0 0 100 20" fill="none" stroke="#9a9a9a" strokeWidth="1.800" className="mr-[29px]">
				<rect x="2" y="1.500" width="16" height="16" rx="2" />
				<path d="M81 1l17 17M98 1L81 18" />
			</svg>
		</div>
		<div className="flex h-[40px] shrink-0 items-center bg-[#b7b7b7] pl-[10px]">
			<span className="w-[43px]">File</span>
			<span>Windows</span>
		</div>
		<Group title="DataLinq Sources" legend="-ml-[6px]" className="mt-[15px] ml-[16px] flex h-[557px] w-[1525px] flex-col pl-[11px]">
			<div className="mt-[9px] flex h-[463px] w-[1498px] flex-col border-2 border-t-[#777] border-r-[#ddd] border-b-[#ddd] border-l-[#777] bg-[#afafaf]">
				<div className="flex h-[33px] items-center border-b-2 border-[#888] bg-linear-to-b from-[#c5c5c5] to-[#a9a9a9]">
					<span className="flex h-full w-[50px] items-center justify-end border-r-2 border-[#888] pr-[9px]">#</span>
					<span className="pl-[9px]">Name</span>
				</div>
				<div className="flex h-[35px] items-center border-b-2 border-[#ddd] bg-[#b1b1e4]">
					<span className="w-[43px] text-right">1</span>
					<span className="pl-[19px]">DataLinq</span>
				</div>
			</div>
			<PushButton className="mt-[12px] h-[40px] w-[122px]"><span><u>A</u>dd New...</span></PushButton>
		</Group>
	</div>
);

const Workspace = () => (
	<div className="relative mt-[7px] ml-[6px] h-[1147px] w-[2617px] shrink-0 overflow-hidden border-t-2 border-r-2 border-b-2 border-l-2 border-t-[#757575] border-r-[#ececec] border-b-[#ececec] border-l-[#6d6d6d] bg-[#8a8a8a]">
		<MainViewport />
		<div className="absolute top-[236px] left-[415px] h-[676px] w-[1554px] rounded-[14px] shadow-[0_20px_60px_10px_rgba(0,0,0,0.25)]" />
		<DatalinqWindow />
	</div>
);

/* ---------- dialog ---------- */

const NodeIcon = ({ x, blue }: { x: number; blue?: boolean }) => (
	<g transform={`translate(${x} 15.500)`}>
		<path d="M1-11v23M-10 7L9-5M-6-6l17 14" stroke="#858585" strokeWidth="4.200" />
		<path d="M0-13v24M-12 5L8-7M-7-8l17 14" stroke="#f6f6f6" strokeWidth="3" />
		<path d="M0-6l2.500 3.500 4-.5-2.500 4 2 4-4.500-1.500-4 3 0-4.500-3.500-3 4-1z" fill={blue ? '#3b8ee0' : '#6ae83c'} />
	</g>
);

const TreeRow = ({ depth, name }: { depth: number; name: string }) => {
	const width = 29 + depth * 31;
	const blue = name === 'root' || name === 'data';
	return (
		<div className="flex h-[30.950px] shrink-0 items-center border-b-2 border-[#dcdcdc]">
			<svg width={width} height="31" viewBox={`0 0 ${width} 31`} fill="none">
				{depth === 1 && <path d={name === 'data' ? 'M16 0v16h16' : 'M16 0v31M16 15h16'} stroke="#9b9b9b" strokeWidth="1.500" />}
				{name === 'data' && (
					<>
						<rect x="9" y="8" width="15" height="15" fill="#adadad" />
						<path d="M12 15.500h9" stroke="#222" strokeWidth="2" />
					</>
				)}
				{depth === 2 && <path d="M47.500 0v31M47.500 15h16" stroke="#9b9b9b" strokeWidth="1.500" />}
				<NodeIcon x={13 + depth * 31} blue={blue} />
			</svg>
			<span className="pl-[2px]">{name}</span>
		</div>
	);
};

const BrowseDialog = () => (
	<div className="absolute top-[225px] left-[913px] flex h-[985px] w-[1276px] flex-col rounded-[14px] bg-[#9d9d9d] shadow-[0_30px_70px_12px_rgba(0,0,0,0.38)]">
		<div className="flex h-[52px] shrink-0 items-center rounded-t-[14px] bg-[#f1f4fa] pb-[1px] pl-[14px] font-['Noto_Sans','Open_Sans',sans-serif] text-[20px] text-[#222]">
			<DatalinqIcon />
			<span className="ml-[7px] flex-1">Browse Datalinq</span>
			<svg width="180" height="20" viewBox="0 0 180 20" fill="none" stroke="#111" strokeWidth="1.800" className="mr-[28px]">
				<path d="M4 10h17" />
				<rect x="81" y="1.500" width="16" height="16" rx="2" />
				<path d="M160 1l17 17M177 1l-17 17" />
			</svg>
		</div>
		<Group title="Selection" className="mt-[5px] h-[91px]">
			<div className="mt-[6px] grid w-[84px] gap-y-[11px] text-right leading-[20px]">
				<span>Column:</span>
				<span>Row:</span>
			</div>
		</Group>
		<Group title="Data" legend="-ml-[5px]" className="mt-[5px] h-[774px] px-[11px]">
			<div className="mt-[9px] flex h-[42px] items-center gap-[18px] bg-linear-to-b from-[#c6c6c6] to-[#afafaf] pl-[8px]">
				<TreeIcon />
				<TreeIcon flat />
			</div>
			<div className="flex h-[693px] justify-between tracking-[-0.200px]">
				<div className="flex w-[373px] flex-col border-2 border-[#888]">
					<div className="flex h-[662px] flex-col overflow-hidden bg-[#cacaca]">
						{dataRows.map((row) => <TreeRow key={row.name} depth={row.depth} name={row.name} />)}
					</div>
					<HScroll />
				</div>
				<div className="flex w-[874px] flex-col border-2 border-[#888] bg-[#b5b5b5]">
					<div className="flex h-[662px]">
						<div className="flex flex-1 flex-col overflow-hidden bg-[#cacaca]">
							{dataRows.map((row) => (
								<div key={row.name} className="flex h-[30.950px] shrink-0 items-center border-b-2 border-[#dcdcdc] pl-[6px]">{row.value}</div>
							))}
						</div>
						<VScroll thumb="h-[584px]" />
					</div>
					<HScroll className="mr-[28px]" />
				</div>
			</div>
		</Group>
		<div className="flex items-center justify-end gap-[7px] pt-[9px] pr-[12px]">
			<PushButton className="h-[38px] w-[130px] border-[#555]"><u>O</u>K</PushButton>
			<PushButton className="h-[38px] w-[131px]"><u>C</u>ancel</PushButton>
		</div>
		<svg className="absolute top-[961px] left-[1086px]" width="22" height="34" viewBox="0 0 22 34">
			<path d="M2 2v24l6-5 4 10 4-2-4-9h8z" fill="#fff" stroke="#111" strokeWidth="1.600" />
		</svg>
	</div>
);

/* ---------- right dock ---------- */

const RightDock = () => (
	<div className="ml-[7px] flex w-[277px] shrink-0 flex-col pt-[6px]">
		<DockHeader title="Object Library" />
		<div className="mt-[4px] flex h-[736px]">
			<div className="flex flex-1 flex-col bg-[#cacaca]">
				{objectRows.map((row) =>
					row.kind === 'head' ? (
						<div key={row.label} className="flex h-[31px] shrink-0 items-center gap-[15px] border-b-2 border-[#8f8f8f] bg-linear-to-b from-[#c0c0c0] to-[#a9a9a9] pl-[9px] font-bold tracking-[-0.100px]">
							<svg width="14" height="14" viewBox="0 0 14 14"><rect width="14" height="14" fill="#f5f5f5" /><path d="M3 7h8" stroke="#556" strokeWidth="2" /></svg>
							{row.label}
						</div>
					) : (
						<div key={row.label} className="flex h-[44.700px] shrink-0 items-center gap-[8px] border-b-2 border-[#dadada] pl-[6px] tracking-[-0.400px]">
							<Tile icon={row.icon ?? 'quad'} />
							{row.label}
						</div>
					)
				)}
			</div>
			<VScroll thumb="h-[455px]" />
		</div>
		<DockHeader title="Output Monitors" className="mt-[8px]" />
		<div className="mt-[3px] h-[338px] bg-[#afafaf]" />
	</div>
);

const SideTabs = () => (
	<div className="flex w-10 shrink-0 flex-col gap-[8px] bg-white pt-[9px] pl-[4px]">
		{sideTabs.map((tab) => (
			<div key={tab.label} className={`w-[34px] shrink-0 border-y-2 border-l-2 border-[#9a9a9a] bg-[#f1f1f1] pt-[1px] leading-[31px] tracking-[-0.300px] [writing-mode:vertical-rl] ${tab.size}`}>{tab.label}</div>
		))}
	</div>
);

/* ---------- object manager ---------- */

const cols = ['w-[43px]', 'w-[43px]', 'w-[77px]', 'w-[103px]', 'w-[112px]', 'w-[112px]', 'w-[112px]', 'w-[112px]', 'w-[95px]'];

const GridCells = ({ cells, className }: { cells: ReactNode[]; className: string }) => (
	<>
		{cols.map((w, i) => (
			<div key={i} className={`flex shrink-0 items-center justify-end border-r-2 border-[#d6d6d6] ${w} ${i === cols.length - 1 ? 'border-r-0 pr-[18px]' : className}`}>{cells[i]}</div>
		))}
	</>
);

const badgeLetters = ['M', 'C', 'E', 'P', 'S', 'K', 'G', 'D'];

const ObjectManager = () => (
	<div className="flex w-[1105px] shrink-0 flex-col">
		<DockHeader title="Object Manager" />
		<div className="mt-[4px] flex h-[40px] items-center bg-linear-to-b from-[#c2c2c2] to-[#b0b0b0] pl-[6px]">
			{[0, 180, 270, 90].map((turn) => (
				<span key={turn} className="mr-[13px]"><GhostArrow turn={turn} /></span>
			))}
			<Sep />
			<span className="ml-[11px]"><TreeIcon /></span>
			<span className="ml-[17px]"><TreeIcon flat /></span>
			<Sep className="ml-[19px]" />
			<svg className="ml-[12px]" width="22" height="28" viewBox="0 0 22 28">
				<rect x="0" y="9" width="8" height="9" fill="#43a9c8" />
				<path d="M8 13h4M12 6v16" stroke="#555" strokeWidth="2" />
				<rect x="13" y="1" width="7" height="10" fill="#9b4fc0" />
				<rect x="13" y="16" width="7" height="9" fill="#e5b848" />
			</svg>
			<Sep className="ml-[12px]" />
			<span className="ml-[12px]"><SearchIcon /></span>
		</div>
		<div className="flex h-[45px] items-center border-b-2 border-[#8b8b8b] bg-linear-to-b from-[#c8c8c8] to-[#acacac]">
			<span className="w-[267px] pl-[3px]">Object</span>
			<Slot className="w-[43px]"><EyeTile /></Slot>
			<Slot className="w-[43px]">
				<div className="flex h-[40px] w-[40px] items-center justify-center rounded-[8px] border-2 border-[#8a8a8a] bg-linear-to-b from-[#8f8f8f] to-[#d8d8d8]">
					<svg width="26" height="32" viewBox="0 0 26 32">
						<rect x="4" y="13" width="18" height="16" rx="6" fill="#a9a9a9" stroke="#eee" strokeWidth="2" />
						<path d="M8 14V8c0-6 10-6 10 0v3" stroke="#eee" strokeWidth="3" fill="none" />
						<path d="M13 18v6" stroke="#eee" strokeWidth="3" />
					</svg>
				</div>
			</Slot>
			<div className="grid w-[77px] grid-cols-4 gap-[1px] pl-[1px]">
				{badgeLetters.map((letter) => (
					<span key={letter} className={`flex h-[20px] items-center justify-center rounded-[3px] font-['Liberation_Sans',Arial,sans-serif] text-[18px] leading-none font-bold tracking-normal text-[#f2f2f2] ${letter === 'K' || letter === 'M' ? 'bg-[#666]' : 'bg-[#868686]'}`}>{letter}</span>
				))}
			</div>
			{['Alpha', 'X-Pos', 'Y-Pos', 'Z-Pos', 'X-Rot', 'Y-Rot'].map((label) => (
				<span key={label} className={`flex h-[40px] items-center justify-center border-r-2 border-[#8b8b8b] pr-[4px] ${label === 'Alpha' ? 'w-[103px]' : 'w-[112px]'}`}>{label}</span>
			))}
		</div>
		<div className="flex h-[248px]">
			<div className="flex flex-1 flex-col bg-[#afafaf]">
				<div className="flex h-[43px] shrink-0 border-b-2 border-[#d9d9e6] bg-[#b1b1e4]">
					<div className="flex w-[267px] items-center gap-[7px] border-r-2 border-[#8b8b8b] pl-[4px]">
						<div className="h-[38px] w-[38px] rounded-[8px] border-2 border-[#888] bg-white bg-[repeating-conic-gradient(#777_0_25%,#ddd_0_50%)] bg-[length:17px_17px]" />
						Scene1
					</div>
					<GridCells className="pr-[22px]" cells={['', '', '', '100.0']} />
				</div>
				<div className="flex h-[44px] shrink-0 border-b-2 border-[#dedede] bg-[#cacaca]">
					<div className="flex w-[267px] items-center border-r-2 border-[#8b8b8b] pl-[8px]">
						<svg width="17" height="42" viewBox="0 0 17 42"><path d="M1 0v21h9" stroke="#8b8b8b" strokeWidth="2" fill="none" /></svg>
						<Tile icon="directional" />
						<span className="pl-[6px]">DirLight1</span>
					</div>
					<div className="flex w-[43px] shrink-0 items-center border-r-2 border-[#d6d6d6] pl-[1px]"><EyeTile blue /></div>
					<div className="w-[43px] shrink-0 border-r-2 border-[#d6d6d6]" />
					<div className="w-[77px] shrink-0 border-r-2 border-[#d6d6d6]" />
					{['100.0', '960.00', '360.00', '200.00', '0.00', '0.00'].map((v, i) => (
						<div key={i} className={`flex shrink-0 items-center justify-end ${cols[i + 3]} ${i === 5 ? 'pr-[18px]' : 'border-r-2 border-[#d6d6d6] pr-[22px]'}`}>{v}</div>
					))}
				</div>
				<div className="flex flex-1">
					<div className="w-[267px] border-r-2 border-[#8b8b8b]" />
					<GridCells className="" cells={[]} />
				</div>
			</div>
			<VScroll />
		</div>
		<div className="mt-[1px] flex">
			<HScroll className="w-[265px]" />
			<HScroll className="ml-[3px] w-[809px]" thumb="w-[475px]" />
		</div>
	</div>
);

/* ---------- object inspector ---------- */

const SpinRows = ({ values }: { values: string[] }) => (
	<div className="flex flex-col pt-[8px]">
		{['Left', 'Right', 'Top', 'Bottom'].map((label, i) => (
			<div key={label} className={`flex items-center ${i === 2 ? 'mt-[8px]' : i > 0 ? 'mt-[5px]' : ''}`}>
				<span className="w-[76px] pt-[3px]">{label}</span>
				<Spin value={values[i]} />
			</div>
		))}
	</div>
);

const ObjectInspector = () => (
	<div className="ml-[8px] flex w-[2141px] shrink-0 flex-col">
		<DockHeader title="Object Inspector - Scene1 - Scene Object" />
		<div className="flex h-[42px] items-end gap-[5px]">
			<div className="flex h-[36px] w-[177px] items-center justify-center rounded-t-[4px] bg-linear-to-b from-[#dedede] to-[#afafaf] font-bold tracking-[-0.100px]">Scene</div>
			{inspectorTabs.map((label) => (
				<div key={label} className="-ml-[1px] flex h-[32px] w-[171.300px] items-center justify-center rounded-t-[4px] border-r border-[#999] bg-linear-to-b from-[#dcdcdc] to-[#c6c6c6] pr-[4px]">{label}</div>
			))}
		</div>
		<div className="flex h-[324px] items-start bg-[#afafaf] pt-[10px] pl-[7px]">
			<Group title="Description" legend="-ml-[5px] font-bold tracking-[-0.300px]" className="h-[306px] w-[471px] pl-[11px]">
				<div className="mt-[9px] flex h-[257px] w-[442px] justify-end border-2 border-black bg-[#e0e0e0] p-[4px]">
					<div className="flex w-[30px] flex-col items-center justify-between bg-[#f1f1f1] py-[6px]">
						<Triangle dir="up" color="#a9a9a9" size={17} />
						<Triangle dir="down" color="#a9a9a9" size={17} />
					</div>
				</div>
			</Group>
			<div className="ml-[12px] flex w-[457px] flex-col">
				<div className="flex justify-between">
					<Group title="Safe Title Area" legend="-ml-[4px] font-bold tracking-[-0.500px]" className="h-[230px] w-[225px] pl-[11px]">
						<SpinRows values={['10%', '10%', '10%', '10%']} />
						<Check label="Visualize" checked className="mt-[14px] pl-[2px]" />
					</Group>
					<Group title="Safe Action Area" legend="-ml-[4px] font-bold tracking-[-0.500px]" className="h-[230px] w-[221px] pl-[11px]">
						<SpinRows values={['5%', '5%', '5%', '5%']} />
						<Check label="Visualize" checked className="mt-[14px] pl-[2px]" />
					</Group>
				</div>
				<Group title="MOS" legend="ml-[7px] font-bold tracking-[-0.300px]" className="mt-[6px] h-[70px] w-[457px]">
					<Check label="Hide scene from MOS / NLE plugin" className="mt-[9px] pl-[17px] tracking-[-0.500px]" />
				</Group>
			</div>
			<Group title="Crop Output" legend="-ml-[4px] font-bold tracking-[-0.400px]" className="ml-[11px] h-[306px] w-[222px] pl-[11px]">
				<SpinRows values={['0', '1920', '0', '1080']} />
				<Check label="Visualize" className="mt-[14px] pl-[2px]" />
				<Check label="Enabled" className="mt-[13px] pl-[2px]" />
			</Group>
			<Group title="Visualize" legend="ml-[7px] font-bold tracking-[-0.300px]" className="ml-[12px] h-[306px] w-[187px]">
				<Check label="Tab Lines" className="mt-[11px] pl-[13px]" />
			</Group>
		</div>
	</div>
);

/* ---------- timeline ---------- */

const transportGlyphs = [
	'M7 7h3v16H7zM20 7v16L10 15z',
	'M14 7v16L5 15zM16 9h2v12h-2zM20 9h2v12h-2z',
	'M8 6l15 9-15 9z',
	'M8 9h2v12H8zM12 9h2v12h-2zM16 7l9 8-9 8z',
	'M8 7l10 8-10 8zM19 7h3v16h-3z',
];

const Transport = ({ active }: { active?: boolean }) => (
	<div className={`flex w-[149px] shrink-0 border-2 ${active ? 'h-[32px] border-[#2222a8]' : 'h-[30px] border-[#666]'}`}>
		{transportGlyphs.map((d, i) => (
			<div key={d} className={`flex flex-1 items-center justify-center bg-linear-to-b from-[#d4daea] to-[#9cacd6] ${i > 0 ? (active ? 'border-l-2 border-[#2222a8]' : 'border-l-2 border-[#777]') : ''}`}>
				<svg width="25" height="26" viewBox="2 2 26 26"><path d={d} fill="#0a0a0a" /></svg>
			</div>
		))}
	</div>
);

const tickStep = 24.83;

const Timeline = () => (
	<div className="flex h-[78px] shrink-0 border-t-2 border-[#8e8e8e] bg-[#9d9d9d] pt-[1px] pl-[6px]">
		<div className="flex w-[223px] shrink-0 flex-col gap-[7px] pt-[3px]">
			<Transport active />
			<Transport />
		</div>
		<div className="flex w-[97px] shrink-0 flex-col gap-[3px]">
			<PushButton className="h-[38px]">Auto Key</PushButton>
			<PushButton className="h-[31px]">Key...</PushButton>
		</div>
		<div className="ml-[8px] flex w-[111px] shrink-0 flex-col gap-[3px]">
			<Spin value="0" className="h-[38px]" />
			<Spin value="0" className="h-[31px]" />
		</div>
		<div className="ml-[3px] flex w-[2617px] shrink-0 flex-col gap-[3px]">
			<div className="h-[38px] border-2 border-black bg-linear-to-b from-[#8c8c8c] to-[#dedede]">
				<svg width="2613" height="34" viewBox="0 0 2613 34">
					<defs>
						<linearGradient id="playRange" x1="0" y1="0" x2="0" y2="1">
							<stop offset="0" stopColor="#b9c5e2" />
							<stop offset="1" stopColor="#a9b9dc" />
						</linearGradient>
					</defs>
					<path d="M0 11h59l5-6 5 6h61v23H0z" fill="url(#playRange)" />
					{Array.from({ length: 103 }, (_, i) => (
						<rect key={i} x={63.500 + i * tickStep} y="0" width="2" height={i % 5 === 0 && i > 0 ? 11 : 5} fill="#222" />
					))}
					{Array.from({ length: 11 }, (_, i) => (
						<text key={i} x={64.500 + i * 10 * tickStep} y="30" textAnchor="middle" fontSize="19" fill="#1b1b1b">{i * 10}</text>
					))}
				</svg>
			</div>
			<div className="h-[31px] border-2 border-black bg-linear-to-b from-[#8c8c8c] to-[#dedede]">
				<div className="flex h-full w-[1333px] items-center justify-between border-2 border-t-[#c9d2e6] border-r-[#777] border-b-[#8090b8] border-l-[#c9d2e6] bg-[#b0bfdf] px-[3px] text-white">
					<div className="flex flex-1 items-center gap-[5px]">
						<div className="h-[18px] w-[20px] border border-[#8f9fc8]" />
						<span>0</span>
						<div className="ml-[612px] h-[27px] w-px bg-[#8f9fc8]" />
					</div>
					<div className="flex items-center gap-[7px]">
						<span>100</span>
						<div className="h-[18px] w-[20px] border border-[#8f9fc8]" />
					</div>
				</div>
			</div>
		</div>
		<div className="ml-[3px] flex w-[229px] shrink-0 flex-col gap-[4px]">
			<div className="flex h-[37px] border-2 border-[#777] bg-[#e0e0e0]">
				<span className="flex-1 self-center pl-[2px] tracking-[-0.600px]">AnimController1</span>
				<div className="flex w-[21px] items-center justify-center border-l-2 border-[#777] bg-[#aaa]"><Triangle dir="down" color="#111" size={11} /></div>
			</div>
			<div className="flex justify-between">
				<Spin value="100" className="h-[31px] w-[111px] text-[17px] tracking-[-0.900px]" />
				<Spin value="200" className="h-[31px] w-[111px] text-[17px] tracking-[-0.900px]" />
			</div>
		</div>
	</div>
);

const App = (): JSX.Element => {
	return (
		<div className="relative flex h-[1774px] w-[3302px] flex-col overflow-hidden bg-[#b9b9b9] font-['DejaVu_Sans_Condensed','DejaVu_Sans',Tahoma,sans-serif] text-[19px] leading-[22px] tracking-[-0.300px] whitespace-nowrap text-[#1b1b1b]">
			<TitleBar />
			<TopBars />
			<div className="flex h-[1562px] shrink-0">
				<div className="flex w-[3262px] shrink-0 flex-col">
					<div className="flex h-[1161px] shrink-0">
						<LeftDock />
						<Workspace />
						<RightDock />
					</div>
					<div className="flex h-[401px] pl-[5px]">
						<ObjectManager />
						<ObjectInspector />
					</div>
				</div>
				<SideTabs />
			</div>
			<Timeline />
			<BrowseDialog />
		</div>
	);
};

export default App;
